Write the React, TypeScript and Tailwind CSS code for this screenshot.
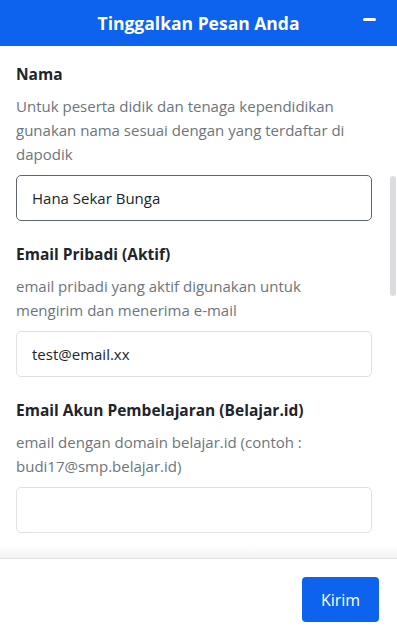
import React from 'react';

const font = { fontFamily: '"Open Sans", "Noto Sans", sans-serif' };

type Field = {
  label: string;
  hint: string;
  value: string;
  focused?: boolean;
};

const fields: Field[] = [
  {
    label: 'Nama',
    hint: 'Untuk peserta didik dan tenaga kependidikan gunakan nama sesuai dengan yang terdaftar di dapodik',
    value: 'Hana Sekar Bunga',
    focused: true,
  },
  {
    label: 'Email Pribadi (Aktif)',
    hint: 'email pribadi yang aktif digunakan untuk mengirim dan menerima e-mail',
    value: 'test@email.xx',
  },
  {
    label: 'Email Akun Pembelajaran (Belajar.id)',
    hint: 'email dengan domain belajar.id (contoh : budi17@smp.belajar.id)',
    value: '',
  },
];

export default function App() {
  return (
    <div className="relative flex h-[635px] w-[397px] flex-col overflow-hidden bg-white" style={font}>
      {/* Header */}
      <div className="relative flex h-[46px] shrink-0 items-center justify-center bg-[#0d63ee]">
        <h1 className="text-[17.5px] font-bold text-white">Tinggalkan Pesan Anda</h1>
        <button className="absolute right-[21px] top-[18px] h-[3px] w-[13px] rounded-sm bg-white" aria-label="minimize" />
      </div>

      {/* Body */}
      <div className="relative flex-1 overflow-hidden">
        <div className="flex flex-col gap-[21px] pl-4 pr-[25px] pt-[16px]">
          {fields.map((f) => (
            <div key={f.label} className="flex flex-col">
              <label className="text-[15.5px] font-bold leading-6 text-[#212529]">{f.label}</label>
              <p className="mt-2 text-[15px] leading-6 text-[#6c757d]">{f.hint}</p>
              <input
                readOnly
                value={f.value}
                className={`mt-[9px] h-[46px] w-full rounded-[5px] border px-[15px] text-[15px] text-[#212529] outline-none ${
                  f.focused ? 'border-[#5f6670]' : 'border-[#dee2e6]'
                }`}
                style={font}
              />
            </div>
          ))}
        </div>

        {/* scrollbar */}
        <div className="absolute left-[390px] top-[130px] h-[120px] w-[6px] rounded-full bg-[#dadce0]" />

        {/* fade */}
        <div className="absolute bottom-0 left-0 right-0 h-[14px] bg-gradient-to-b from-white to-[#f3f3f3]" />
      </div>

      {/* Footer */}
      <div className="flex h-[77px] shrink-0 items-start justify-end border-t border-[#e3e3e3] pr-[18px] pt-[18px]">
        <button className="h-[45px] w-[77px] rounded-[4px] bg-[#0d63ee] text-[16px] text-white">Kirim</button>
      </div>
    </div>
  );
}
